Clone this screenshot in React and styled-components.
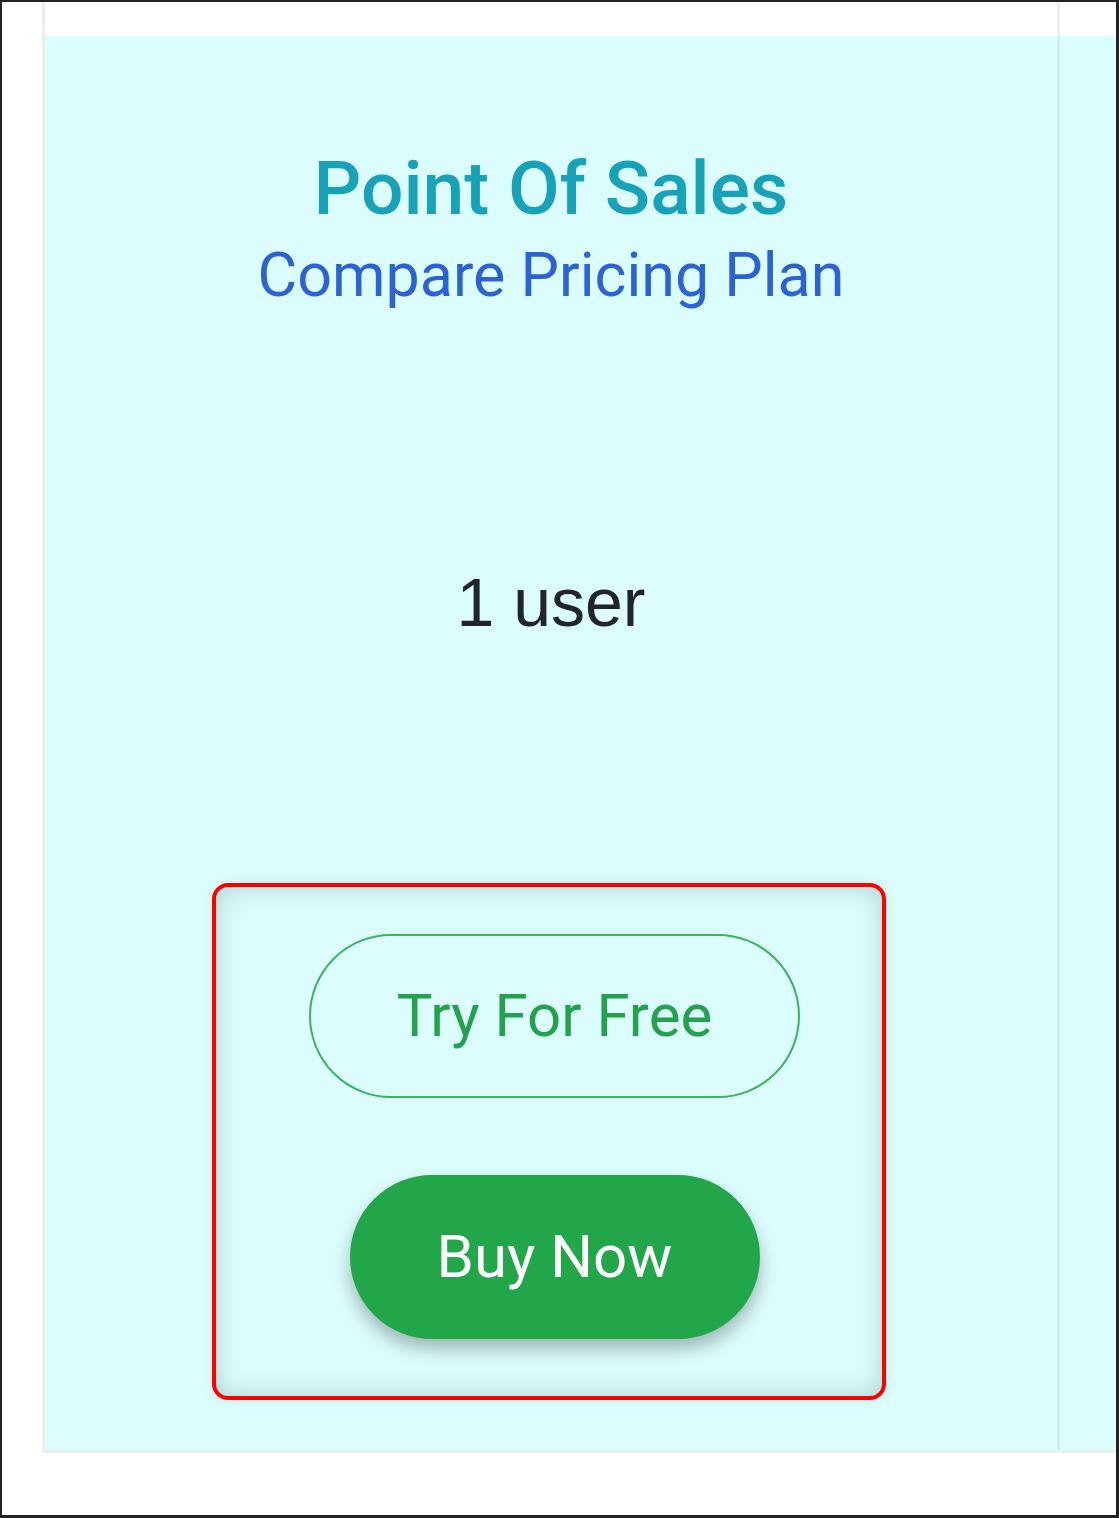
import React from "react";
import styled, { createGlobalStyle } from "styled-components";

const Global = createGlobalStyle`
  html, body { margin: 0; padding: 0; background: #fff; }
  * { box-sizing: border-box; }
`;

const Frame = styled.div`
  width: 1119px;
  height: 1518px;
  border-style: solid;
  border-color: #222;
  border-width: 2px 3px 3px 2px;
  background: #fff;
  padding-left: 40px;
  overflow: hidden;
`;

const Table = styled.div`
  display: grid;
  grid-template-columns: 1015px 1fr;
  grid-template-rows: 34px 1414px;
  border-left: 3px solid rgba(0, 0, 0, 0.07);
  border-bottom: 3px solid rgba(0, 0, 0, 0.07);
`;

const Cell = styled.div`
  background: ${(p) => (p.$head ? "#ffffff" : "#dcfdfd")};
  border-right: ${(p) => (p.$divider ? "3px solid rgba(0,0,0,0.06)" : "none")};
`;

const PlanCell = styled(Cell)`
  display: flex;
  flex-direction: column;
  align-items: center;
  padding-top: 107px;
  font-family: Roboto, "Liberation Sans", sans-serif;
`;

const Title = styled.h2`
  margin: 0;
  font-size: 75px;
  line-height: 1.2;
  font-weight: 500;
  color: #17a2b8;
`;

const Subtitle = styled.div`
  margin-top: 6px;
  font-size: 61px;
  line-height: 1.2;
  font-weight: 400;
  color: #2c62d3;
`;

const Users = styled.div`
  margin-top: 250px;
  font-family: "Liberation Sans", Arial, sans-serif;
  font-size: 68px;
  line-height: 1.2;
  color: #212529;
`;

const Highlight = styled.div`
  margin-top: 239px;
  margin-right: 4px;
  width: 674px;
  height: 517px;
  border: 4px solid #ff0000;
  border-radius: 16px;
  box-shadow: 0 0 14px rgba(0, 0, 0, 0.08), inset 0 0 26px rgba(0, 50, 50, 0.22);
  display: flex;
  flex-direction: column;
  align-items: center;
  padding-top: 47px;
  padding-left: 11px;
  gap: 77px;
`;

const PillButton = styled.button`
  font-family: Roboto, "Liberation Sans", sans-serif;
  font-size: 60px;
  line-height: 90px;
  font-weight: 400;
  border-radius: 999px;
  cursor: pointer;
  padding: 35px 0;
  width: ${(p) => p.$w}px;
  border: 2px solid ${(p) => (p.$solid ? "#22a64a" : "#3ab262")};
  background: ${(p) => (p.$solid ? "#22a64a" : "transparent")};
  color: ${(p) => (p.$solid ? "#ffffff" : "#22a24d")};
  box-shadow: ${(p) => (p.$solid ? "0 10px 18px rgba(0,0,0,0.28)" : "none")};
`;

export default function App() {
  return (
    <>
      <Global />
      <Frame>
        <Table>
          <Cell $head $divider />
          <Cell $head />
          <PlanCell $divider>
            <Title>Point Of Sales</Title>
            <Subtitle>Compare Pricing Plan</Subtitle>
            <Users>1 user</Users>
            <Highlight>
              <PillButton $w={491}>Try For Free</PillButton>
              <PillButton $w={410} $solid>Buy Now</PillButton>
            </Highlight>
          </PlanCell>
          <Cell />
        </Table>
      </Frame>
    </>
  );
}
